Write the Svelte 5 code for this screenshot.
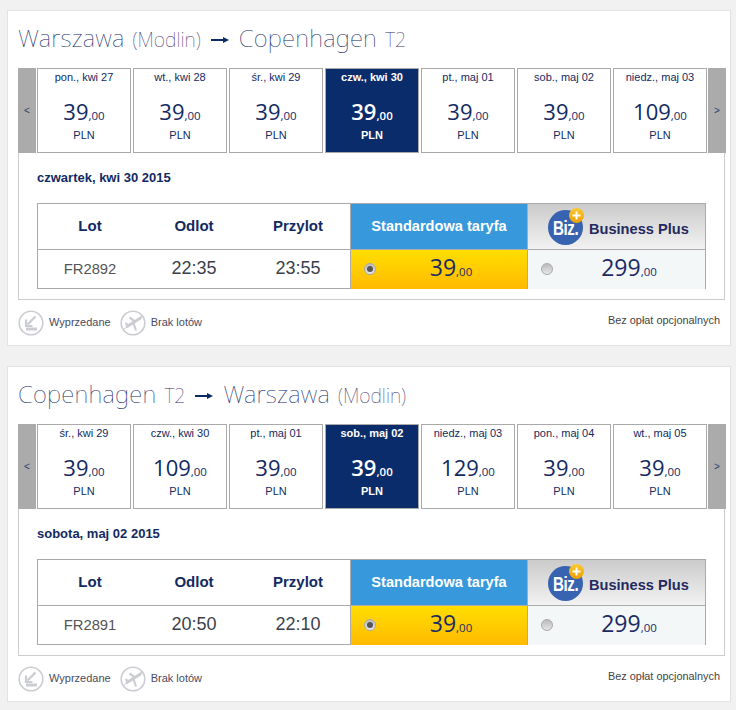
<script lang="ts">
  type Flight = {
    from: string; fromNote: string; to: string; toNote: string;
    days: { label: string; price: string; active?: boolean }[];
    dateLabel: string; flight: string; dep: string; arr: string;
  };

  const flights: Flight[] = [
    {
      from: 'Warszawa', fromNote: '(Modlin)', to: 'Copenhagen', toNote: 'T2',
      days: [
        { label: 'pon., kwi 27', price: '39' },
        { label: 'wt., kwi 28', price: '39' },
        { label: 'śr., kwi 29', price: '39' },
        { label: 'czw., kwi 30', price: '39', active: true },
        { label: 'pt., maj 01', price: '39' },
        { label: 'sob., maj 02', price: '39' },
        { label: 'niedz., maj 03', price: '109' }
      ],
      dateLabel: 'czwartek, kwi 30 2015', flight: 'FR2892', dep: '22:35', arr: '23:55'
    },
    {
      from: 'Copenhagen', fromNote: 'T2', to: 'Warszawa', toNote: '(Modlin)',
      days: [
        { label: 'śr., kwi 29', price: '39' },
        { label: 'czw., kwi 30', price: '109' },
        { label: 'pt., maj 01', price: '39' },
        { label: 'sob., maj 02', price: '39', active: true },
        { label: 'niedz., maj 03', price: '129' },
        { label: 'pon., maj 04', price: '39' },
        { label: 'wt., maj 05', price: '39' }
      ],
      dateLabel: 'sobota, maj 02 2015', flight: 'FR2891', dep: '20:50', arr: '22:10'
    }
  ];
</script>

<div class="page">
  {#each flights as f}
    <section class="card">
      <h2 class="title">
        <span class="city">{f.from}</span>
        <span class="note">{f.fromNote}</span>
        <svg class="arrow" width="18" height="8" viewBox="0 0 18 8"><path d="M0 4h13" stroke="#0e2a63" stroke-width="2"/><path d="M12 1l6 3-6 3z" fill="#0e2a63"/></svg>
        <span class="city">{f.to}</span>
        <span class="note">{f.toNote}</span>
      </h2>

      <div class="panel">
        <div class="strip">
          <div class="nav">&lt;</div>
          {#each f.days as d}
            <div class="day" class:active={d.active}>
              <div class="day-label">{d.label}</div>
              <div class="day-price">{d.price}<small>,00</small></div>
              <div class="day-cur">PLN</div>
            </div>
          {/each}
          <div class="nav">&gt;</div>
        </div>

        <div class="date">{f.dateLabel}</div>

        <div class="fares">
          <div class="th">Lot</div>
          <div class="th">Odlot</div>
          <div class="th">Przylot</div>
          <div class="th-std">Standardowa taryfa</div>
          <div class="th-biz">
            <span class="biz-logo">
              <span class="biz-text">Biz.</span>
              <svg class="biz-plus" width="15" height="15" viewBox="0 0 15 15">
                <defs>
                  <linearGradient id="plus-fill" x1="0" y1="0" x2="0" y2="1">
                    <stop offset="0" stop-color="#fdc92f"/>
                    <stop offset="1" stop-color="#eb9f05"/>
                  </linearGradient>
                </defs>
                <circle cx="7.5" cy="7.5" r="7.5" fill="url(#plus-fill)"/>
                <path d="M7.5 3.500v8M3.500 7.500h8" stroke="#fff" stroke-width="2"/>
              </svg>
            </span>
            <span class="biz-name">Business Plus</span>
          </div>
          <div class="td td-code">{f.flight}</div>
          <div class="td td-time">{f.dep}</div>
          <div class="td td-time">{f.arr}</div>
          <div class="fare fare-std">
            <span class="radio on"></span>
            <span class="fare-price">39<small>,00</small></span>
          </div>
          <div class="fare fare-biz">
            <span class="radio"></span>
            <span class="fare-price">299<small>,00</small></span>
          </div>
        </div>
      </div>

      <div class="legend">
        <svg width="26" height="26" viewBox="0 0 26 26" fill="none" stroke="#cbcdd2">
          <circle cx="13" cy="13" r="11.8" stroke-width="1.6"/>
          <path d="M17.5 6.5L9.5 14.5" stroke-width="2.4"/>
          <path d="M8 9.5v6.5h6.5" stroke-width="2.2"/>
          <path d="M8 19h11" stroke-width="3"/>
        </svg>
        <span class="legend-text">Wyprzedane</span>
        <svg class="plane" width="26" height="26" viewBox="0 0 26 26" fill="none" stroke="#cbcdd2">
          <circle cx="13" cy="13" r="11.8" stroke-width="1.6"/>
          <path d="M3.500 19.500L22 6" stroke-width="1"/>
          <path d="M7 16.500L20.500 8" stroke-width="2.800" stroke-linecap="round"/>
          <path d="M15 11.500L9.500 7.500M13.500 13l2.500 7.500M8 15.500L5.500 13" stroke-width="2.200"/>
        </svg>
        <span class="legend-text">Brak lotów</span>
        <span class="legend-note">Bez opłat opcjonalnych</span>
      </div>
    </section>
  {/each}
</div>

<style>
  :global(body) {
    margin: 0;
    background: #f1f1f1;
    font-family: "Liberation Sans", Arial, sans-serif;
  }

  .page {
    padding: 10px 0 0 7px;
  }

  .card {
    box-sizing: border-box;
    width: 724px;
    height: 336px;
    margin-bottom: 20px;
    padding: 0 5px 0 10px;
    background: #fff;
    border: 1px solid #e2e2e2;
  }

  .title {
    display: flex;
    align-items: baseline;
    gap: 8px;
    margin: 0;
    height: 57px;
    padding-top: 11px;
    box-sizing: border-box;
    font-family: "Noto Sans", sans-serif;
    font-weight: 100;
    font-size: 24px;
    line-height: 32px;
    color: #10285f;
    white-space: nowrap;
  }

  .city {
    letter-spacing: 0.25px;
  }

  .note {
    font-size: 19.5px;
    color: #3a2f66;
  }

  .arrow {
    align-self: flex-start;
    margin: 14px 2px 0;
  }

  .panel {
    box-sizing: border-box;
    width: 707px;
    height: 232px;
    border: 1px solid #ccc;
    border-top: none;
  }

  .strip {
    display: flex;
    gap: 2px;
    margin: 0 -1px;
    height: 85px;
  }

  .nav {
    flex: 0 0 18px;
    display: flex;
    align-items: center;
    justify-content: center;
    background: #ababab;
    color: #2b3f70;
    font-size: 10px;
    margin-right: -1px;
  }

  .nav:last-child {
    margin-left: -1px;
    margin-right: 0;
  }

  .day {
    box-sizing: border-box;
    flex: 0 0 94px;
    height: 85px;
    border: 1px solid #aaa;
    background: #fff;
    color: #122a62;
    text-align: center;
  }

  .day.active {
    background: #0b2c6b;
    color: #fff;
    font-weight: 700;
  }

  .day-label {
    font-size: 11px;
    line-height: 14px;
    padding-top: 1px;
  }

  .day-price {
    margin-top: 12px;
    height: 30px;
    font-family: "Open Sans", sans-serif;
    font-size: 22px;
    line-height: 30px;
  }

  .day.active .day-price {
    font-weight: 600;
  }

  .day-price small, .fare-price small {
    font-size: 11.5px;
    font-weight: 400;
  }

  .day.active .day-price small {
    font-weight: 600;
  }

  .day-cur {
    margin-top: 2px;
    font-size: 11px;
    line-height: 14px;
  }

  .date {
    height: 50px;
    padding: 17px 0 0 18px;
    box-sizing: border-box;
    font-size: 13px;
    line-height: 15px;
    font-weight: 700;
    color: #122a62;
  }

  .fares {
    box-sizing: border-box;
    display: grid;
    grid-template-columns: 104px 104px 104px 177px 178px;
    grid-template-rows: 46px 39px;
    width: 669px;
    height: 86px;
    margin-left: 18px;
    border: 1px solid #aaa;
  }

  .th {
    display: flex;
    align-items: center;
    justify-content: center;
    padding-bottom: 2px;
    border-bottom: 1px solid #aaa;
    font-size: 15px;
    font-weight: 700;
    color: #122a62;
  }

  .th-std {
    display: flex;
    align-items: center;
    justify-content: center;
    padding-bottom: 2px;
    background: #3798dc;
    color: #fff;
    font-size: 14.6px;
    font-weight: 700;
    border-bottom: 1px solid #aaa;
    border-left: 1px solid #aaa;
  }

  .th-biz {
    display: flex;
    align-items: center;
    gap: 6px;
    padding-left: 20px;
    background: linear-gradient(#cbcbcb, #f2f2f2);
    border-bottom: 1px solid #aaa;
    border-left: 1px solid #aaa;
  }

  .biz-logo {
    position: relative;
    display: flex;
    align-items: center;
    justify-content: center;
    width: 35px;
    height: 35px;
    margin-top: 2px;
    border-radius: 50%;
    background: #3763b0;
  }

  .biz-text {
    margin-top: 1px;
    color: #fff;
    font-size: 21px;
    font-weight: 700;
    line-height: 12px;
    letter-spacing: -0.5px;
    transform: scaleX(0.72);
  }

  .biz-plus {
    position: absolute;
    top: -2px;
    right: -1px;
  }

  .biz-name {
    margin-top: 5px;
    font-size: 14.6px;
    font-weight: 700;
    color: #24295f;
  }

  .td {
    display: flex;
    align-items: center;
    justify-content: center;
    padding-bottom: 3px;
    color: #3b3f4a;
  }

  .td-code {
    padding-bottom: 1px;
    font-size: 14.8px;
    color: #555;
  }

  .td-time {
    font-size: 18px;
  }

  .fare {
    position: relative;
    display: flex;
    align-items: center;
    justify-content: center;
    border-left: 1px solid #aaa;
    padding: 0 0 1px 24px;
  }

  .fare-std {
    background: linear-gradient(#ffde00, #ffba00);
  }

  .fare-biz {
    background: #f3f7f8;
    padding-left: 25px;
  }

  .fare-price {
    font-family: "Open Sans", sans-serif;
    font-size: 23px;
    line-height: 30px;
    color: #1c2a66;
  }

  .radio {
    position: absolute;
    left: 13px;
    top: 13px;
    box-sizing: border-box;
    width: 12px;
    height: 12px;
    border-radius: 50%;
    border: 1px solid #aaa;
    background: linear-gradient(#bbb, #e6e6e6);
  }

  .radio.on::after {
    content: "";
    position: absolute;
    left: 2px;
    top: 2px;
    width: 6px;
    height: 6px;
    border-radius: 50%;
    background: #555;
  }

  .legend {
    display: flex;
    align-items: center;
    height: 26px;
    margin-top: 10px;
    font-size: 11px;
    color: #4b4a60;
  }

  .legend-text {
    margin-left: 5px;
    margin-top: -2px;
  }

  .plane {
    margin-left: 9px;
  }

  .legend-note {
    margin-left: auto;
    color: #444;
    margin-right: 5px;
    margin-top: -6px;
    font-size: 10.9px;
  }
</style>
